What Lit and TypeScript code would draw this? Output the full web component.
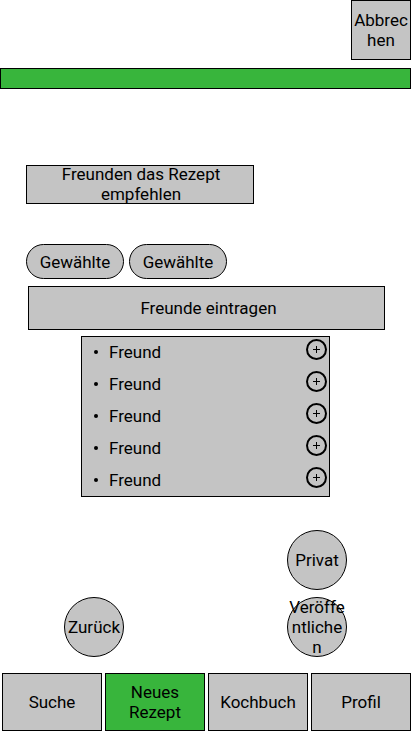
import { LitElement, css, html } from "lit";
import { customElement, property, state } from "lit/decorators.js";

const base = css`
  *,
  *::before,
  *::after {
    box-sizing: border-box;
  }
  button,
  input {
    font: inherit;
    color: inherit;
    margin: 0;
    padding: 0;
    border: 1px solid #000;
    border-radius: 0;
    background: #c4c4c4;
  }
  button {
    cursor: pointer;
  }
`;

@customElement("friend-list")
class FriendList extends LitElement {
  @property({ type: Array }) friends: string[] = [];

  static styles = [
    base,
    css`
      :host {
        display: block;
        border: 1px solid #000;
        background: #c4c4c4;
      }
      .list {
        display: grid;
        gap: 4px;
        list-style: none;
        margin: 0;
        padding: 2px 2px 1px 12px;
      }
      .row {
        display: flex;
        align-items: flex-start;
        height: 28px;
      }
      .bullet {
        flex: none;
        width: 4px;
        height: 4px;
        margin-top: 11px;
        border-radius: 50%;
        background: #000;
      }
      .name {
        flex: 1;
        margin-left: 11px;
        line-height: 26px;
      }
      .add {
        display: flex;
        border: 0;
        background: none;
      }
      .icon {
        display: block;
        width: 21px;
        height: 21px;
        fill: none;
        stroke: #000;
      }
    `,
  ];

  render() {
    return html`<ul class="list">
      ${this.friends.map(
        (name) => html`<li class="row">
          <span class="bullet"></span>
          <span class="name">${name}</span>
          <button class="add" type="button" aria-label="Hinzufügen">
            <svg class="icon" viewBox="0 0 21 21">
              <circle cx="10.5" cy="10.5" r="9.5" stroke-width="2" />
              <path d="M10.5 7v7M7 10.5h7" stroke-width="1" />
            </svg>
          </button>
        </li>`,
      )}
    </ul>`;
  }
}

@customElement("app-root")
class AppRoot extends LitElement {
  @state() private active = "Neues Rezept";

  private chosen = ["Gewählte", "Gewählte"];
  private friends = ["Freund", "Freund", "Freund", "Freund", "Freund"];
  private tabs = ["Suche", "Neues Rezept", "Kochbuch", "Profil"];

  static styles = [
    base,
    css`
      :host {
        display: flex;
        flex-direction: column;
        min-height: 100vh;
        background: #fff;
        color: #000;
        font: 17px/20px Roboto, sans-serif;
      }
      .cancel {
        align-self: flex-end;
        width: 60px;
        height: 60px;
        padding: 0 1px;
        word-break: break-all;
      }
      .bar {
        height: 21px;
        margin-top: 8px;
        border: 1px solid #000;
        background: #38b53c;
      }
      .main {
        display: flex;
        flex-direction: column;
        padding: 76px 26px 0;
      }
      .title {
        display: flex;
        align-items: center;
        justify-content: center;
        width: 228px;
        height: 39px;
        margin: 0 0 40px;
        padding: 0 30px 2px 32px;
        border: 1px solid #000;
        background: #c4c4c4;
        font-size: inherit;
        font-weight: 400;
        text-align: center;
      }
      .chips {
        display: flex;
        gap: 5px;
        margin-bottom: 7px;
      }
      .chip {
        width: 98px;
        height: 35px;
        border-radius: 18px;
      }
      .entry {
        height: 44px;
        margin-left: 2px;
        padding-left: 4px;
        text-align: center;
      }
      .entry::placeholder {
        color: #000;
        opacity: 1;
      }
      .friends {
        margin: 6px 55px 0;
      }
      .actions {
        display: flex;
        align-items: flex-end;
        justify-content: space-between;
        margin: 33px 0 16px;
        padding: 0 64px;
      }
      .publish {
        display: flex;
        flex-direction: column;
        gap: 7px;
      }
      .round {
        display: flex;
        align-items: center;
        justify-content: center;
        width: 60px;
        height: 60px;
        border-radius: 50%;
        word-break: break-all;
      }
      .tabs {
        display: grid;
        grid-template-columns: repeat(4, 1fr);
        gap: 3px;
        margin-top: auto;
        padding-left: 2px;
      }
      .tab {
        height: 58px;
        padding: 0 8px;
      }
      .tab[aria-current="page"] {
        padding: 0 16px;
        background: #38b53c;
      }
    `,
  ];

  render() {
    return html`
      <button class="cancel" type="button">Abbrechen</button>
      <div class="bar"></div>
      <main class="main">
        <h1 class="title">Freunden das Rezept empfehlen</h1>
        <div class="chips">
          ${this.chosen.map(
            (name) => html`<button class="chip" type="button">${name}</button>`,
          )}
        </div>
        <input
          class="entry"
          type="text"
          placeholder="Freunde eintragen"
          aria-label="Freunde eintragen"
        />
        <friend-list class="friends" .friends=${this.friends}></friend-list>
      </main>
      <div class="actions">
        <button class="round" type="button">Zurück</button>
        <div class="publish">
          <button class="round" type="button">Privat</button>
          <button class="round" type="button">Veröffentlichen</button>
        </div>
      </div>
      <nav class="tabs">
        ${this.tabs.map(
          (tab) => html`<button
            class="tab"
            type="button"
            aria-current=${tab === this.active ? "page" : "false"}
            @click=${() => (this.active = tab)}
          >
            ${tab}
          </button>`,
        )}
      </nav>
    `;
  }
}
